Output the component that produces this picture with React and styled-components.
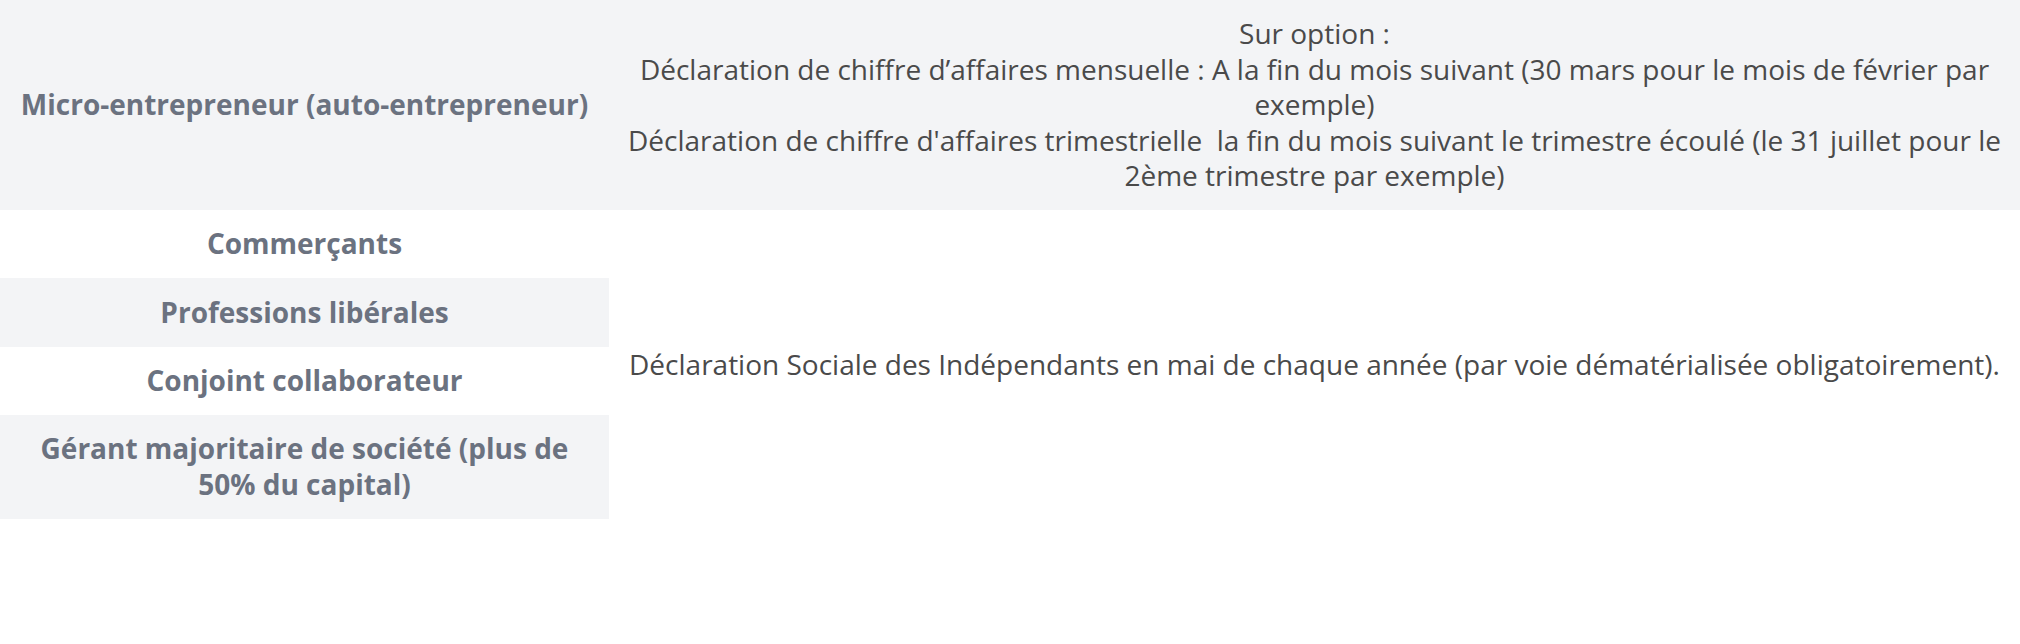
import styled, { createGlobalStyle } from "styled-components";

const Global = createGlobalStyle`
  html, body {
    margin: 0;
    padding: 0;
    background: #ffffff;
  }
  body {
    font-family: "Open Sans", "Liberation Sans", sans-serif;
  }
`;

const Table = styled.table`
  width: 2020px;
  border-collapse: collapse;
  table-layout: fixed;
  font-size: 28px;
  line-height: 35.6px;
`;

const Row = styled.tr`
  background: ${({ $shaded }) => ($shaded ? "#f3f4f6" : "#ffffff")};
`;

const Label = styled.th`
  width: 577px;
  padding: 16.4px 16px;
  text-align: center;
  vertical-align: middle;
  font-weight: 700;
  color: #6b7280;
`;

const Value = styled.td`
  padding: 16px 16px;
  text-align: center;
  vertical-align: middle;
  font-weight: 400;
  color: #4a4a4a;
`;

const rows = [
  "Commerçants",
  "Professions libérales",
  "Conjoint collaborateur",
  "Gérant majoritaire de société (plus de 50% du capital)",
];

export default function App() {
  return (
    <>
      <Global />
      <Table>
        <tbody>
          <Row $shaded>
            <Label>Micro-entrepreneur (auto-entrepreneur)</Label>
            <Value>
              Sur option :<br />
              Déclaration de chiffre d’affaires mensuelle : A la fin du mois
              suivant (30 mars pour le mois de février par exemple)
              <br />
              Déclaration de chiffre d'affaires trimestrielle&nbsp; la fin du
              mois suivant le trimestre écoulé (le 31 juillet pour le 2ème
              trimestre par exemple)
            </Value>
          </Row>
          {rows.map((label, i) => (
            <Row key={label} $shaded={i % 2 === 1}>
              <Label>{label}</Label>
              {i === 0 && (
                <Value rowSpan={4}>
                  Déclaration Sociale des Indépendants en mai de chaque année
                  (par voie dématérialisée obligatoirement).
                </Value>
              )}
            </Row>
          ))}
        </tbody>
      </Table>
    </>
  );
}
